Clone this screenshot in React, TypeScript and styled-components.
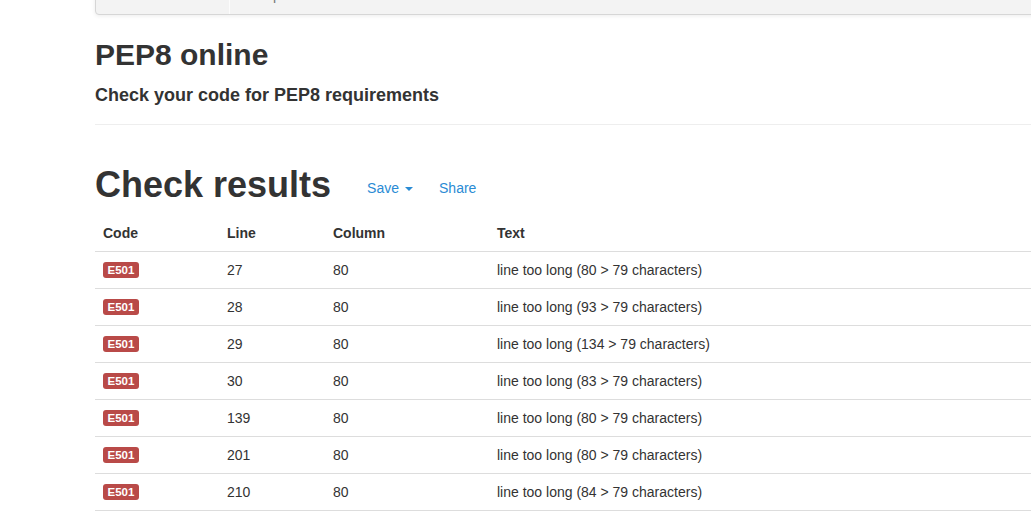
import React from "react";
import styled, { createGlobalStyle } from "styled-components";

const Global = createGlobalStyle`
  html, body {
    margin: 0;
    padding: 0;
    overflow: hidden;
    background: #fff;
  }
  body {
    font-family: "Liberation Sans", Arial, sans-serif;
    font-size: 14px;
    line-height: 20px;
    color: #333;
  }
  * { box-sizing: border-box; }
`;

const Page = styled.div`
  width: 1170px;
  margin-left: 80px;
  padding: 0 15px;
`;

const Navbar = styled.nav`
  display: flex;
  height: 51px;
  margin-top: -36px;
  background: #f3f3f3;
  border: 1px solid #d6d6d6;
  border-radius: 4px;
  box-shadow: 0 1px 4px rgba(0, 0, 0, 0.08);
`;

const Brand = styled.div`
  width: 134px;
  padding: 15px;
  font-size: 18px;
  line-height: 20px;
  color: #777;
  border-right: 1px solid #fcfcfc;
`;

const NavLink = styled.a`
  display: block;
  padding: 20px 15px 10px 22px;
  color: #777;
  text-decoration: none;
`;

const PageHeader = styled.header`
  margin-top: 23px;
  padding-bottom: 19px;
  border-bottom: 1px solid #eee;
`;

const Title = styled.h2`
  margin: 0;
  font-size: 30px;
  line-height: 33px;
  font-weight: 700;
`;

const Subtitle = styled.h4`
  margin: 14px 0 0;
  font-size: 18px;
  line-height: 20px;
  font-weight: 700;
`;

const ResultsHeader = styled.div`
  display: flex;
  align-items: flex-start;
  margin-top: 40px;
`;

const Heading = styled.h1`
  margin: 0;
  font-size: 36px;
  line-height: 1.1;
  font-weight: 700;
`;

const Actions = styled.div`
  display: flex;
  gap: 26px;
  margin: 13px 0 0 36px;
`;

const ActionLink = styled.a`
  display: inline-flex;
  align-items: center;
  color: #2a8bd4;
  text-decoration: none;
  cursor: pointer;
`;

const Caret = styled.span`
  display: inline-block;
  width: 0;
  height: 0;
  margin-left: 6px;
  margin-top: 1px;
  border-top: 4px solid currentColor;
  border-left: 4px solid transparent;
  border-right: 4px solid transparent;
`;

const Table = styled.table`
  width: 1140px;
  margin-top: 10px;
  border-collapse: collapse;
  border-spacing: 0;
  table-layout: fixed;
`;

const Th = styled.th<{ $w?: number }>`
  width: ${(p) => (p.$w ? `${p.$w}px` : "auto")};
  padding: 8px;
  text-align: left;
  font-weight: 700;
  line-height: 20px;
  vertical-align: bottom;
  border-bottom: 1px solid #ddd;
`;

const Row = styled.tr`
  &:last-child td {
    border-bottom: 1px solid #ddd;
  }
`;

const Td = styled.td`
  padding: 8px;
  line-height: 20px;
  vertical-align: top;
  border-top: 1px solid #ddd;
`;

const Badge = styled.span`
  display: inline-block;
  padding: 1px 4.5px;
  font-size: 11.5px;
  line-height: 14px;
  font-weight: 700;
  color: #fff;
  background: #b94a48;
  border-radius: 3px;
  vertical-align: middle;
  position: relative;
  top: -1px;
`;

const rows: [string, string, string, string][] = [
  ["E501", "27", "80", "line too long (80 > 79 characters)"],
  ["E501", "28", "80", "line too long (93 > 79 characters)"],
  ["E501", "29", "80", "line too long (134 > 79 characters)"],
  ["E501", "30", "80", "line too long (83 > 79 characters)"],
  ["E501", "139", "80", "line too long (80 > 79 characters)"],
  ["E501", "201", "80", "line too long (80 > 79 characters)"],
  ["E501", "210", "80", "line too long (84 > 79 characters)"],
];

export default function App() {
  return (
    <>
      <Global />
      <Page>
        <Navbar>
          <Brand>PEP8 online</Brand>
          <NavLink>Help</NavLink>
        </Navbar>
        <PageHeader>
          <Title>PEP8 online</Title>
          <Subtitle>Check your code for PEP8 requirements</Subtitle>
        </PageHeader>
        <ResultsHeader>
          <Heading>Check results</Heading>
          <Actions>
            <ActionLink>
              Save
              <Caret />
            </ActionLink>
            <ActionLink>Share</ActionLink>
          </Actions>
        </ResultsHeader>
        <Table>
          <thead>
            <tr>
              <Th $w={124}>Code</Th>
              <Th $w={106}>Line</Th>
              <Th $w={164}>Column</Th>
              <Th>Text</Th>
            </tr>
          </thead>
          <tbody>
            {rows.map((r, i) => (
              <Row key={i}>
                <Td>
                  <Badge>{r[0]}</Badge>
                </Td>
                <Td>{r[1]}</Td>
                <Td>{r[2]}</Td>
                <Td>{r[3]}</Td>
              </Row>
            ))}
          </tbody>
        </Table>
      </Page>
    </>
  );
}
